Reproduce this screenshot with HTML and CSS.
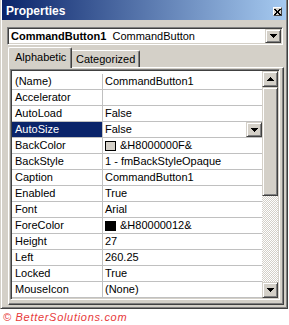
FILE: index.html
```html
<!DOCTYPE html>
<html lang="en">
<head>
    <meta charset="UTF-8">
    <title>Properties</title>
    <link rel="stylesheet" href="styles.css">
</head>
<body>

    <div class="window">
        <!-- Title bar -->
        <div class="titlebar">
            <span class="title">Properties</span>
            <span class="close-btn">
                <svg width="7" height="6" viewBox="0 0 7 6" shape-rendering="crispEdges">
                    <path d="M0 0h2v1H0zM5 0h2v1H5zM1 1h2v1H1zM4 1h2v1H4zM2 2h3v2H2zM1 4h2v1H1zM4 4h2v1H4zM0 5h2v1H0zM5 5h2v1H5z" fill="#000"/>
                </svg>
            </span>
        </div>

        <!-- Object combo -->
        <div class="combo">
            <span class="combo-text"><b>CommandButton1</b>&nbsp;&nbsp;CommandButton</span>
            <span class="btn3d drop-btn">
                <svg width="7" height="4" viewBox="0 0 7 4" shape-rendering="crispEdges"><path d="M0 0h7v1H0zM1 1h5v1H1zM2 2h3v1H2zM3 3h1v1H3z" fill="#000"/></svg>
            </span>
        </div>

        <!-- Tabs -->
        <div class="tabs">
            <div class="tab active">Alphabetic</div>
            <div class="tab">Categorized</div>
        </div>

        <div class="page">
            <div class="grid">
                <div class="rows">
                    <div class="row"><div class="name">(Name)</div><div class="value">CommandButton1</div></div>
                    <div class="row"><div class="name">Accelerator</div><div class="value"></div></div>
                    <div class="row"><div class="name">AutoLoad</div><div class="value">False</div></div>
                    <div class="row selected">
                        <div class="name">AutoSize</div>
                        <div class="value">
                            <span class="value-text">False</span>
                            <span class="btn3d cell-btn">
                                <svg width="7" height="4" viewBox="0 0 7 4" shape-rendering="crispEdges"><path d="M0 0h7v1H0zM1 1h5v1H1zM2 2h3v1H2zM3 3h1v1H3z" fill="#000"/></svg>
                            </span>
                        </div>
                    </div>
                    <div class="row"><div class="name">BackColor</div><div class="value"><span class="swatch swatch-face"></span>&amp;H8000000F&amp;</div></div>
                    <div class="row"><div class="name">BackStyle</div><div class="value">1 - fmBackStyleOpaque</div></div>
                    <div class="row"><div class="name">Caption</div><div class="value">CommandButton1</div></div>
                    <div class="row"><div class="name">Enabled</div><div class="value">True</div></div>
                    <div class="row"><div class="name">Font</div><div class="value">Arial</div></div>
                    <div class="row"><div class="name">ForeColor</div><div class="value"><span class="swatch swatch-black"></span>&amp;H80000012&amp;</div></div>
                    <div class="row"><div class="name">Height</div><div class="value">27</div></div>
                    <div class="row"><div class="name">Left</div><div class="value">260.25</div></div>
                    <div class="row"><div class="name">Locked</div><div class="value">True</div></div>
                    <div class="row"><div class="name">MouseIcon</div><div class="value">(None)</div></div>
                </div>

                <!-- Vertical scrollbar -->
                <div class="scrollbar">
                    <div class="btn3d scroll-btn">
                        <svg width="7" height="4" viewBox="0 0 7 4" shape-rendering="crispEdges"><path d="M3 0h1v1H3zM2 1h3v1H2zM1 2h5v1H1zM0 3h7v1H0z" fill="#000"/></svg>
                    </div>
                    <div class="btn3d thumb"></div>
                    <div class="track"></div>
                    <div class="btn3d scroll-btn">
                        <svg width="7" height="4" viewBox="0 0 7 4" shape-rendering="crispEdges"><path d="M0 0h7v1H0zM1 1h5v1H1zM2 2h3v1H2zM3 3h1v1H3z" fill="#000"/></svg>
                    </div>
                </div>
            </div>
        </div>
    </div>

    <div class="credit">© BetterSolutions.com</div>

</body>
</html>
```

FILE: styles.css
```css
body {
    margin: 0;
    background-color: #fff;
    font-family: "Liberation Sans", Arial, sans-serif;
    font-size: 11px;
    color: #000;
}

/* Outer tool window frame */
.window {
    width: 288px;
    height: 309px;
    box-sizing: border-box;
    background-color: #d4d0c8;
    border-style: solid;
    border-width: 0 1px 1px 1px;
    border-color: #d4d0c8 #404040 #404040 #d4d0c8;
    box-shadow: inset 1px 0 #fff, inset -1px -1px #808080;
    padding: 0 1px 1px 1px;
    display: flex;
    flex-direction: column;
}

.titlebar {
    height: 20px;
    flex-shrink: 0;
    background: linear-gradient(to right, #0a246a, #a6caf0);
    display: flex;
    align-items: flex-start;
    justify-content: space-between;
    padding: 0 4px 0 4px;
}

.title {
    color: #fff;
    font-weight: bold;
    font-size: 12px;
    line-height: 17px;
    padding-top: 3px;
}

.close-btn {
    margin-top: 7px;
    width: 9px;
    height: 9px;
    box-sizing: border-box;
    background-color: #d4d0c8;
    border: 1px solid;
    border-color: #fff #404040 #404040 #fff;
    display: flex;
    align-items: center;
    justify-content: center;
}

/* Generic raised 3D button */
.btn3d {
    box-sizing: border-box;
    background-color: #d4d0c8;
    border: 1px solid;
    border-color: #d4d0c8 #404040 #404040 #d4d0c8;
    box-shadow: inset 1px 1px #fff, inset -1px -1px #808080;
    display: flex;
    align-items: center;
    justify-content: center;
}

.combo {
    margin: 7px 3px 0 5px;
    height: 18px;
    flex-shrink: 0;
    box-sizing: border-box;
    background-color: #fff;
    border: 1px solid;
    border-color: #808080 #fff #fff #808080;
    box-shadow: inset 1px 1px #404040, inset -1px -1px #d4d0c8;
    padding: 1px;
    display: flex;
    align-items: stretch;
}

.combo-text {
    flex: 1;
    padding-left: 2px;
    line-height: 14px;
    white-space: nowrap;
}

.drop-btn {
    width: 16px;
}

.tabs {
    display: flex;
    align-items: flex-end;
    height: 20px;
    flex-shrink: 0;
    margin: 2px 0 0 6px;
    position: relative;
    z-index: 1;
}

.tab {
    box-sizing: border-box;
    height: 17px;
    width: 68px;
    padding-left: 4px;
    line-height: 16px;
    border-top: 1px solid #fff;
    border-right: 1px solid #404040;
    box-shadow: inset -1px 0 #808080;
    border-top-right-radius: 2px;
}

.tab.active {
    width: 64px;
    height: 21px;
    margin-bottom: -1px;
    padding-left: 6px;
    line-height: 19px;
    background-color: #d4d0c8;
    border-left: 1px solid #fff;
    border-top-left-radius: 2px;
}

/* Tab page */
.page {
    flex: 1;
    margin: 0 2px 2px 6px;
    border: 1px solid;
    border-color: #fff #404040 #404040 #fff;
    box-shadow: inset -1px -1px #808080;
    padding: 1px 3px 4px 1px;
    display: flex;
}

.grid {
    flex: 1;
    display: flex;
    border: 1px solid;
    border-color: #808080 #fff #fff #808080;
    box-shadow: inset 1px 1px #404040, inset -1px -1px #d4d0c8;
    padding: 1px;
}

.rows {
    flex: 1;
    background-color: #fff;
    padding-top: 3px;
}

.row {
    display: flex;
    height: 16px;
    box-sizing: border-box;
    border-bottom: 1px solid #c0c0c0;
    line-height: 15px;
    white-space: nowrap;
}

.name {
    width: 91px;
    padding-left: 3px;
    box-sizing: border-box;
    border-right: 1px solid #c0c0c0;
}

.value {
    flex: 1;
    padding-left: 2px;
    display: flex;
    align-items: center;
}

.row.selected .name {
    background-color: #0a246a;
    color: #fff;
}

.value-text {
    flex: 1;
}

.cell-btn {
    width: 16px;
    height: 15px;
}

.swatch {
    width: 11px;
    height: 10px;
    box-sizing: border-box;
    border: 1px solid #000;
    margin-right: 4px;
}

.swatch-face {
    background-color: #d4d0c8;
}

.swatch-black {
    background-color: #000;
}

/* Scrollbar */
.scrollbar {
    width: 16px;
    display: flex;
    flex-direction: column;
}

.scroll-btn {
    height: 16px;
}

.thumb {
    height: 109px;
}

.track {
    flex: 1;
    background: repeating-conic-gradient(#d4d0c8 0 25%, #fff 0 50%) 0 0 / 2px 2px;
}

.credit {
    margin: 2px 0 0 3px;
    color: #e8393a;
    font-style: italic;
    font-size: 11px;
    letter-spacing: 0.7px;
}
```
